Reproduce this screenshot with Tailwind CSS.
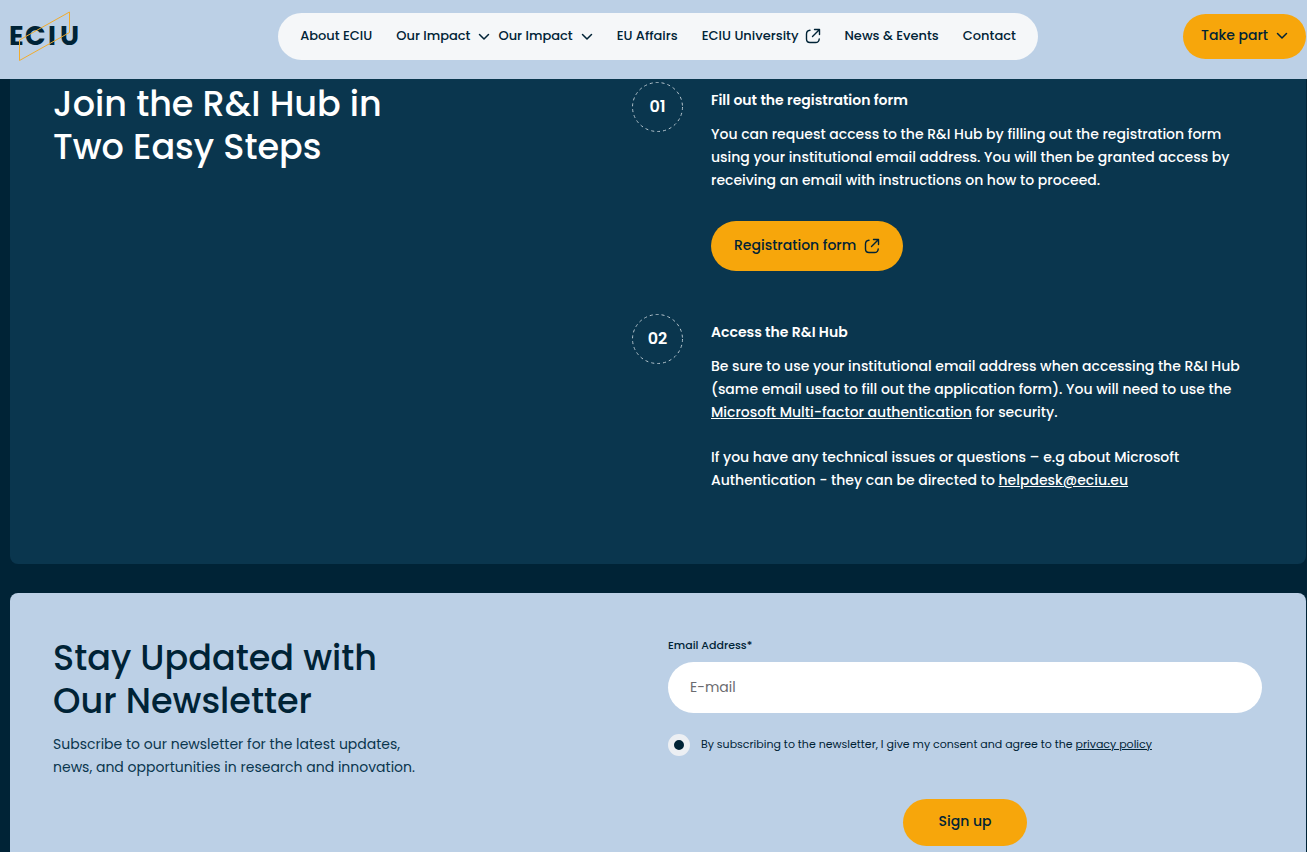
<!DOCTYPE html>
<html lang="en">
<head>
<meta charset="utf-8">
<meta name="viewport" content="width=device-width, initial-scale=1">
<title>ECIU R&amp;I Hub</title>
<script src="https://cdn.jsdelivr.net/npm/@tailwindcss/browser@4"></script>
</head>
<body class="flex min-h-screen flex-col bg-[#002336] font-[Poppins,Inter,sans-serif] text-[#002336]">
<header class="grid h-[79px] shrink-0 grid-cols-[1fr_auto_1fr] items-start bg-[#bcd0e6] pr-px pl-[10px]">
  <a href="#" aria-label="ECIU home" class="mt-[11px] justify-self-start">
    <svg width="72" height="50" viewBox="0 0 72 50">
      <g font-size="27" font-weight="700" fill="#002336">
        <text x="-1" y="34">E</text>
        <text x="15" y="34">C</text>
        <text x="38" y="34">I</text>
        <text x="50" y="34">U</text>
      </g>
      <path d="M9.500 29 59.500 1v20.500L9.500 49.500Z" fill="none" stroke="#f0ab2e" stroke-width="1"/>
    </svg>
  </a>
  <nav class="mt-[13px] flex h-[47px] items-center gap-6 rounded-full bg-[#f5f7f9] px-[22px] pb-px text-[13px] font-medium whitespace-nowrap">
    <a href="#">About ECIU</a>
    <div class="flex items-center gap-2">
      <button class="flex items-center gap-2">Our Impact
        <svg class="mt-[2px]" width="12" height="8" viewBox="0 0 12 8" fill="none" stroke="currentColor" stroke-width="1.500" stroke-linecap="round" stroke-linejoin="round"><path d="M1.500 1.500 6 6l4.500-4.500"/></svg>
      </button>
      <button class="flex items-center gap-2">Our Impact
        <svg class="mt-[2px]" width="12" height="8" viewBox="0 0 12 8" fill="none" stroke="currentColor" stroke-width="1.500" stroke-linecap="round" stroke-linejoin="round"><path d="M1.500 1.500 6 6l4.500-4.500"/></svg>
      </button>
    </div>
    <a href="#">EU Affairs</a>
    <a href="#" class="flex items-center gap-[6px]">ECIU University
      <svg width="16" height="16" viewBox="0 0 16 16" fill="none" stroke="currentColor" stroke-width="1.400" stroke-linecap="round" stroke-linejoin="round"><path d="M5 2.200Q1.500 2.500 1.500 6v5Q1.500 14.500 5 14.500h5.500Q14 14.500 14.200 11M7.500 8.500l6.500-6.500M9.500 1.500h5v5"/></svg>
    </a>
    <a href="#">News &amp; Events</a>
    <a href="#">Contact</a>
  </nav>
  <button class="mt-[14px] flex h-[45px] items-center gap-2 justify-self-end rounded-full bg-[#f7a60b] px-[18px] pb-[3px] text-sm font-medium">Take part
    <svg class="mt-[2px]" width="12" height="8" viewBox="0 0 12 8" fill="none" stroke="currentColor" stroke-width="1.500" stroke-linecap="round" stroke-linejoin="round"><path d="M1.500 1.500 6 6l4.500-4.500"/></svg>
  </button>
</header>
<main class="flex grow flex-col gap-[29px] pr-px pl-[10px]">
  <section class="grid grid-cols-[579fr_630fr] rounded-b-lg bg-[#0a364e] pt-[3px] pr-[44px] pb-[72px] pl-[43px] text-white">
    <h2 class="text-[35px] leading-[43px] font-medium">Join the R&amp;I Hub in<br>Two Easy Steps</h2>
    <ol class="flex flex-col gap-[43px] text-sm leading-[23px] font-medium">
      <li class="flex gap-7">
        <div class="relative flex h-[50px] w-[51px] shrink-0 items-center justify-center text-base font-semibold">
          <svg class="absolute inset-0" width="51" height="50" viewBox="0 0 51 50" fill="none" stroke="#b3c3cc" stroke-dasharray="3 3"><ellipse cx="25.500" cy="25" rx="25" ry="24.500"/></svg>01
        </div>
        <div class="pt-[6px]">
          <h3 class="mb-[11px] leading-6 font-semibold">Fill out the registration form</h3>
          <p>You can request access to the R&amp;I Hub by filling out the registration form<br>using your institutional email address. You will then be granted access by<br>receiving an email with instructions on how to proceed.</p>
          <a href="#" class="mt-[29px] flex h-[50px] w-fit items-center gap-2 rounded-full bg-[#f7a60b] px-[23px] text-[#002336]"><span class="pb-[2px]">Registration form</span>
            <svg width="16" height="16" viewBox="0 0 16 16" fill="none" stroke="currentColor" stroke-width="1.400" stroke-linecap="round" stroke-linejoin="round"><path d="M5 2.200Q1.500 2.500 1.500 6v5Q1.500 14.500 5 14.500h5.500Q14 14.500 14.200 11M7.500 8.500l6.500-6.500M9.500 1.500h5v5"/></svg>
          </a>
        </div>
      </li>
      <li class="flex gap-7">
        <div class="relative flex h-[50px] w-[51px] shrink-0 items-center justify-center text-base font-semibold">
          <svg class="absolute inset-0" width="51" height="50" viewBox="0 0 51 50" fill="none" stroke="#b3c3cc" stroke-dasharray="3 3"><ellipse cx="25.500" cy="25" rx="25" ry="24.500"/></svg>02
        </div>
        <div class="pt-[6px]">
          <h3 class="mb-[11px] leading-6 font-semibold">Access the R&amp;I Hub</h3>
          <p>Be sure to use your institutional email address when accessing the R&amp;I Hub<br>(same email used to fill out the application form). You will need to use the<br><a href="#" class="underline">Microsoft Multi-factor authentication</a> for security.</p>
          <p class="mt-[22px]">If you have any technical issues or questions – e.g about Microsoft<br>Authentication - they can be directed to <a href="#" class="underline">helpdesk@eciu.eu</a></p>
        </div>
      </li>
    </ol>
  </section>
  <section class="grid grow grid-cols-[615fr_594fr] rounded-t-lg bg-[#bcd0e6] pt-[43px] pr-[44px] pb-[6px] pl-[43px]">
    <div>
      <h2 class="text-[35px] leading-[43px] font-medium">Stay Updated with<br>Our Newsletter</h2>
      <p class="mt-[11px] text-sm leading-[23px] text-[#0a364e]">Subscribe to our newsletter for the latest updates,<br>news, and opportunities in research and innovation.</p>
    </div>
    <form class="flex flex-col">
      <label for="email" class="text-[11px] leading-[18px] font-medium">Email Address*</label>
      <input id="email" type="email" placeholder="E-mail" class="mt-2 h-[51px] w-full rounded-full bg-white px-[22px] text-sm placeholder:text-[#6b6b70]">
      <div class="mt-[21px] flex gap-[11px] text-[11px] leading-5">
        <input id="consent" type="radio" checked class="size-[22px] shrink-0 appearance-none rounded-full border-[6px] border-[#eceff3] bg-[#002336]">
        <label for="consent">By subscribing to the newsletter, I give my consent and agree to the <a href="#" class="underline">privacy policy</a></label>
      </div>
      <button type="button" class="mt-[43px] h-[47px] self-center rounded-full bg-[#f7a60b] px-9 pb-[3px] text-sm font-medium">Sign up</button>
    </form>
  </section>
</main>
</body>
</html>
